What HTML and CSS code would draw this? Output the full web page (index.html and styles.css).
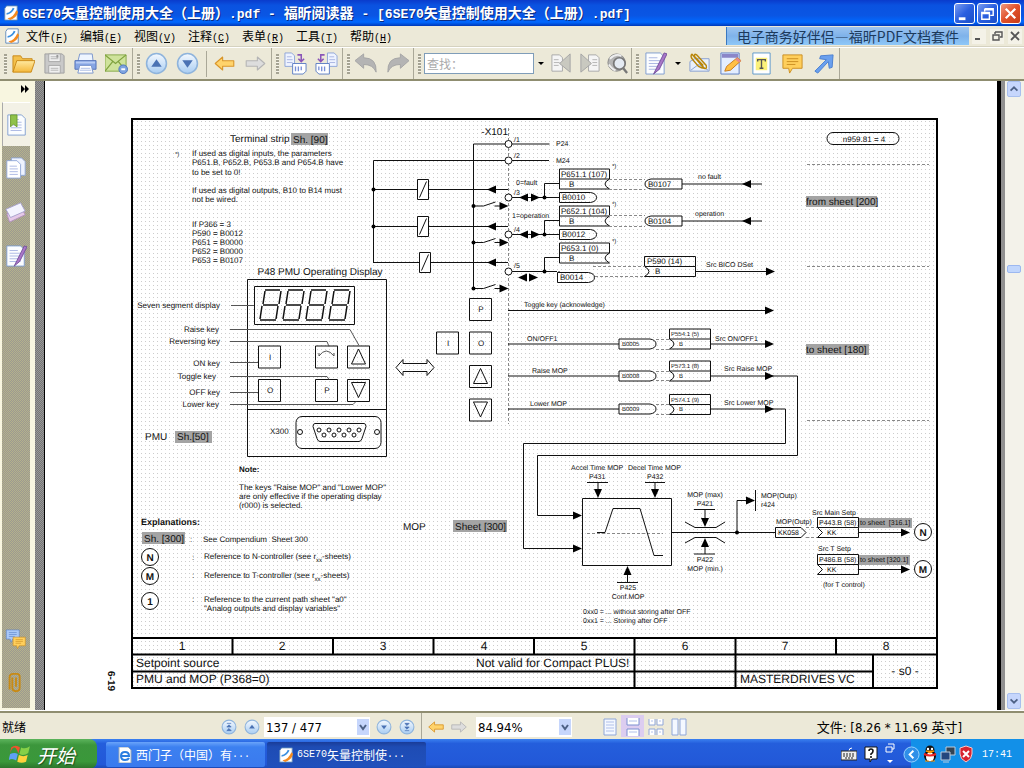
FILE: index.html
```html
<!DOCTYPE html>
<html lang="zh-CN">
<head>
<meta charset="utf-8">
<title>6SE70矢量控制使用大全（上册）.pdf - 福昕阅读器</title>
<link rel="stylesheet" href="styles.css">
</head>
<body>
<svg class="defs" aria-hidden="true">
  <defs>
    <linearGradient id="gFolder" x1="0" y1="0" x2="0" y2="1"><stop offset="0" stop-color="#ffe9a0"/><stop offset="1" stop-color="#f5b93c"/></linearGradient>
    <linearGradient id="gBall" x1="0" y1="0" x2="0" y2="1"><stop offset="0" stop-color="#f4f9ff"/><stop offset="1" stop-color="#a9cdf2"/></linearGradient>
    <symbol id="fox" viewBox="0 0 18 18">
      <path d="M4 1h12v16H2V4z" fill="#fff" stroke="#5b86b8"/>
      <path d="M4 9q5-1 7-6l2 1q-3 6-9 7z" fill="#3a8fe0"/>
      <path d="M5 15q7-1 10-9l2 2q-2 7-9 9z" fill="#f58a1f"/>
    </symbol>
    <symbol id="sheet" viewBox="0 0 24 24">
      <path d="M2 1h15l4 4v18H2z" fill="#fbfdff" stroke="#7f9ed0"/>
      <path d="M5 6h9M5 9h12M5 12h12M5 15h12M5 18h12" stroke="#a9b6e2" fill="none"/>
    </symbol>
    <symbol id="pen" viewBox="0 0 24 24">
      <path d="M10 23l3-6L21 1l3 1-8 16z" fill="#a877c8" stroke="#75509c"/>
    </symbol>
    <symbol id="left" viewBox="0 0 22 18"><path d="M1 9l8-7v4h12v6H9v4z" stroke-width="1.2" stroke-linejoin="round"/></symbol>
    <symbol id="ball" viewBox="0 0 22 22"><circle cx="11" cy="11" r="9.5" fill="url(#gBall)" stroke="#8fb4dc" stroke-width="1.5"/></symbol>
    <symbol id="bubble" viewBox="0 0 24 24"><path d="M2 3h20v14H12l-3 5-1-5H2z" stroke-linejoin="round"/><path d="M6 7h12M6 10h12M6 13h9" fill="none"/></symbol>
  </defs>
</svg>

<header class="titlebar">
  <svg class="i16"><use href="#fox"/></svg>
  <h1 class="title"><span class="lat">6SE70</span>矢量控制使用大全（上册）<span class="lat">.pdf - </span>福昕阅读器<span class="lat"> - [6SE70</span>矢量控制使用大全（上册）<span class="lat">.pdf]</span></h1>
  <div class="winbtns">
    <button class="wb" aria-label="最小化"><svg viewBox="0 0 20 20"><path d="M4 14h7v3H4z" fill="#fff"/></svg></button>
    <button class="wb" aria-label="还原"><svg viewBox="0 0 20 20"><path d="M7 5h9v7h-3M7 5v3M7 6h9M4 9h8v7H4zM4 10h8" fill="none" stroke="#fff" stroke-width="1.5"/></svg></button>
    <button class="wb close" aria-label="关闭"><svg viewBox="0 0 20 20"><path d="M5 5l10 10M15 5L5 15" stroke="#fff" stroke-width="2.4"/></svg></button>
  </div>
</header>

<nav class="menubar">
  <svg class="i16 doc"><use href="#fox"/></svg>
  <button>文件<span>(<u>F</u>)</span></button>
  <button>编辑<span>(<u>E</u>)</span></button>
  <button>视图<span>(<u>V</u>)</span></button>
  <button>注释<span>(<u>C</u>)</span></button>
  <button>表单<span>(<u>R</u>)</span></button>
  <button>工具<span>(<u>T</u>)</span></button>
  <button>帮助<span>(<u>H</u>)</span></button>
  <a class="banner" href="#">电子商务好伴侣—福昕PDF文档套件</a>
  <div class="mdi">
    <button aria-label="最小化文档"><svg viewBox="0 0 14 14"><path d="M3 10h5" stroke="#555" stroke-width="2"/></svg></button>
    <button aria-label="还原文档"><svg viewBox="0 0 14 14"><path d="M5 3h7v5h-2M5 3v2M3 6h6v5H3z" fill="none" stroke="#555" stroke-width="1.4"/></svg></button>
    <button aria-label="关闭文档"><svg viewBox="0 0 14 14"><path d="M3 3l8 8M11 3l-8 8" stroke="#555" stroke-width="1.8"/></svg></button>
  </div>
</nav>

<div class="toolbar">
  <div class="group">
    <i class="grip"></i>
    <button class="tb" aria-label="打开"><svg viewBox="0 0 24 24"><path d="M1 21V4h8l2 3h10v4" fill="#f3c04b" stroke="#c98a1a"/><path d="M1 21L5 9h19l-4 12z" fill="url(#gFolder)" stroke="#c98a1a"/></svg></button>
    <button class="tb" aria-label="保存"><svg viewBox="0 0 24 24"><path d="M2 2h18l2 2v18H2z" fill="#c9c9c9" stroke="#a0a0a0"/><path d="M6 2h12v8H6zM6 14h12v8H6z" fill="#f0f0f0" stroke="#a8a8a8"/><path d="M8 5h8M8 7h8M8 17h8M8 19h8" stroke="#b5b5b5"/><path d="M14 3h2v3h-2z" fill="#999"/></svg></button>
    <button class="tb" aria-label="打印"><svg viewBox="0 0 24 24"><path d="M6 2h13l1 8H4z" fill="#eef5ff" stroke="#7a95cc"/><path d="M1 9h22v9H1z" fill="#86a5e4" stroke="#5572b8"/><path d="M2 10h20v2H2z" fill="#b9cdf5"/><path d="M6 14h12l2 8H4z" fill="#fff" stroke="#7a95cc"/><path d="M7 17h10M6 19h12" stroke="#a9bbe5"/></svg></button>
    <button class="tb" aria-label="邮件"><svg viewBox="0 0 24 24"><path d="M0 3h22v17H0z" fill="#cfe39b" stroke="#86a84a"/><path d="M0 3l11 9L22 3M0 20l8-10M22 20l-8-10" fill="none" stroke="#7fa23e" stroke-width="1.3"/><circle cx="19" cy="18" r="4.5" fill="#7ea3e0" stroke="#4c74bd"/><path d="M17 18h4" stroke="#fff" stroke-width="2"/></svg></button>
  </div>
  <div class="group">
    <i class="grip"></i>
    <button class="tb" aria-label="上一页"><svg viewBox="0 0 22 22"><use href="#ball"/><path d="M6 14l5-7 5 7z" fill="#4a72b4"/></svg></button>
    <button class="tb" aria-label="下一页"><svg viewBox="0 0 22 22"><use href="#ball"/><path d="M6 8l5 7 5-7z" fill="#4a72b4"/></svg></button>
    <i class="split"></i>
    <button class="tb" aria-label="后退"><svg viewBox="0 0 22 22" fill="#ffd36b" stroke="#d9962a"><use href="#left" x="1" y="3" width="20" height="16"/></svg></button>
    <button class="tb" aria-label="前进"><svg viewBox="0 0 22 22" class="flip" fill="#ddd" stroke="#b5b5b5"><use href="#left" x="1" y="3" width="20" height="16"/></svg></button>
  </div>
  <div class="group">
    <i class="grip"></i>
    <button class="tb" aria-label="向右旋转"><svg viewBox="0 0 24 24"><path d="M1 1h7l3 3v11H1z" fill="#eef3ff" stroke="#8fa6d8"/><path d="M3 5h5M3 8h6M3 11h6" stroke="#a9b6e2"/><path d="M14 3h4v6M15 7l3 3 3-3" fill="none" stroke="#8a55b8" stroke-width="1.6"/><path d="M9 12h14v8l-3 3H9z" fill="#fff" stroke="#5f7fc4"/><path d="M12 15v5M15 15v5M18 15v4" stroke="#7890d8" stroke-width="1.4"/></svg></button>
    <button class="tb" aria-label="向左旋转"><svg viewBox="0 0 24 24"><path d="M13 1h7l3 3v11H13z" fill="#eef3ff" stroke="#8fa6d8"/><path d="M15 5h5M15 8h6M15 11h6" stroke="#a9b6e2"/><path d="M10 3H6v6M3 7l3 3 3-3" fill="none" stroke="#8a55b8" stroke-width="1.6"/><path d="M1 12h14v11H4l-3-3z" fill="#fff" stroke="#5f7fc4"/><path d="M4 15v4M7 15v5M10 15v5" stroke="#7890d8" stroke-width="1.4"/></svg></button>
  </div>
  <div class="group">
    <i class="grip"></i>
    <button class="tb" aria-label="撤销"><svg viewBox="0 0 24 24"><path d="M0 9l9-7v4q14 0 13 15-3-8-13-8v4z" fill="#b4b4b4" stroke="#a5a5a5"/></svg></button>
    <button class="tb" aria-label="重做"><svg viewBox="0 0 24 24"><path d="M24 9l-9-7v4Q1 6 2 21q3-8 13-8v4z" fill="#b4b4b4" stroke="#a5a5a5"/></svg></button>
  </div>
  <div class="group">
    <i class="grip"></i>
    <input class="find" type="text" aria-label="查找" placeholder="查找：">
    <button class="dd" aria-label="查找选项"></button>
    <button class="tb nar" aria-label="查找上一个"><svg viewBox="0 0 24 24"><path d="M2 3h8l3 3v14H2z" fill="#f5f5f5" stroke="#a9a9a9"/><path d="M4 8h5M4 11h6M4 14h5" stroke="#b5b5b5"/><path d="M21 2v19L10 12z" fill="#c9c9c0" stroke="#a5a5a5"/></svg></button>
    <button class="tb nar" aria-label="查找下一个"><svg viewBox="0 0 24 24"><path d="M11 3h8l3 3v14H11z" fill="#f5f5f5" stroke="#a9a9a9"/><path d="M15 8h5M15 11h5M15 14h5" stroke="#b5b5b5"/><path d="M3 2v19l11-9z" fill="#c9c9c0" stroke="#a5a5a5"/></svg></button>
    <button class="tb nar" aria-label="搜索"><svg viewBox="0 0 24 24"><circle cx="11" cy="11" r="9" fill="#b5b5b5" stroke="#888"/><path d="M4 7q6-6 12-3M3 13q3 5 7 6" stroke="#eee" stroke-width="2" fill="none"/><circle cx="14" cy="12" r="6" fill="#e4eaf2" stroke="#777" stroke-width="1.8"/><path d="M18 17l4 5" stroke="#777" stroke-width="2.4"/></svg></button>
  </div>
  <div class="group">
    <i class="grip"></i>
    <button class="tb" aria-label="签名"><svg viewBox="0 0 24 24"><use href="#sheet"/><use href="#pen"/></svg></button>
    <button class="dd" aria-label="更多"></button>
    <button class="tb" aria-label="附件"><svg viewBox="0 0 24 24"><path d="M2 10l5-3h15v13H2z" fill="#e9f0fb" stroke="#88a0d0"/><path d="M3 19l8-6 10 6" fill="none" stroke="#88a0d0"/><path d="M4 2l13 15q3 1 2-3L9 3Q6 1 7 5l9 9M4 2q-2 3 1 6l6 7q3 2 6 2" fill="none" stroke="#b8860b" stroke-width="1.5"/></svg></button>
    <button class="tb" aria-label="编辑"><svg viewBox="0 0 24 24"><path d="M2 1h19v22H2z" fill="#e4eeff" stroke="#5f7fc4"/><path d="M3 2h17v4H3z" fill="#8a86c8"/><path d="M6 20l2-5L19 6l4 3-11 10z" fill="#ffc045" stroke="#c87a1a"/><path d="M19 6l4 3-2 2-4-3z" fill="#e88a8a"/></svg></button>
    <button class="tb" aria-label="文本"><svg viewBox="0 0 24 24"><path d="M3 1h18v22H3z" fill="#fff" stroke="#5f9acb"/><path d="M6 6h12v13H6z" fill="#fbf17a"/><path d="M8 10V8h8v2M12 8v9M10 17h4" fill="none" stroke="#555" stroke-width="1.4"/></svg></button>
    <button class="tb" aria-label="注释"><svg viewBox="0 0 24 24" fill="#ffcf5c" stroke="#cc8f22"><use href="#bubble"/></svg></button>
    <button class="tb" aria-label="箭头"><svg viewBox="0 0 24 24"><path d="M3 20L15 8l-7-1 1-3 13-1-1 13-3 1-1-7L6 22z" fill="#6aa0ee" stroke="#4a7fd0"/></svg></button>
  </div>
</div>

<main class="work">
  <aside class="side">
    <button class="expand" aria-label="展开"><svg viewBox="0 0 10 8"><path d="M1 0l4 4-4 4zM5 0l4 4-4 4z"/></svg></button>
    <div class="tabs">
      <button class="tab on" aria-label="书签"><svg viewBox="0 0 24 24"><use href="#sheet"/><path d="M5 1h7v13l-4-3-3 3z" fill="#8fc24a" stroke="#6b9a2c"/></svg></button>
      <button class="tab" aria-label="页面"><svg viewBox="0 0 24 24"><path d="M7 1h11l4 4v15H7z" fill="#eef3ff" stroke="#8fa6d8"/><path d="M2 4h11l4 4v15H2z" fill="#fff" stroke="#8fa6d8"/><path d="M5 10h8M5 13h9M5 16h9M5 19h9" stroke="#a9b6e2"/></svg></button>
      <button class="tab" aria-label="图层"><svg viewBox="0 0 24 24"><path d="M2 14l16-6 4 7-17 8z" fill="#e5c9e8" stroke="#b492c0"/><path d="M1 9l16-7 5 9-16 7z" fill="#f4f4ff" stroke="#a5a0cc"/></svg></button>
      <button class="tab" aria-label="签名"><svg viewBox="0 0 24 24"><use href="#sheet"/><use href="#pen"/></svg></button>
      <button class="tab low" aria-label="注释"><svg viewBox="0 0 24 24"><g fill="#a9c8f8" stroke="#5f86cc"><use href="#bubble" x="0" y="0" width="17" height="17"/></g><g fill="#ffcf5c" stroke="#cc8f22"><use href="#bubble" x="7" y="8" width="17" height="16"/></g></svg></button>
      <button class="tab" aria-label="附件"><svg viewBox="0 0 24 24"><path d="M8 6v11q0 4 4 4t4-4V5q0-3-3-3H9Q5 2 5 6v13M12 6v10" fill="none" stroke="#c88a14" stroke-width="2"/></svg></button>
    </div>
  </aside>
  <div class="canvas">
    <svg class="page" viewBox="45 81 952 629" role="img" aria-label="Setpoint source">
      <defs>
        <pattern id="dots" width="4" height="4" patternUnits="userSpaceOnUse"><rect x="1" y="1" width="1" height="1" fill="#ccc"/></pattern>
        <path id="ar" d="M0 0l-9-4v8z"/>
        <path id="al" d="M0 0l9-4v8z"/>
        <path id="ad" d="M0 0l-4-9h8z"/>
        <path id="au" d="M0 0l-4 9h8z"/>
        <g id="digit" class="seg"><path d="M1 0h15M-1 15h15M-4 30h16M1 1l-2 13M17 1l-2 13M-2 16l-2 13M14 16l-2 13"/></g>
        <g id="relay" class="box"><path d="M0 0h11v20H0zM2 18l7-16"/></g>
        <g id="sw"><path class="ln" d="M0 0h10l12-4M21 0h8"/><circle r="2"/><use href="#ar" x="35"/></g>
        <g id="src"><path class="box" d="M0 0h50v10H0zM50 20H0V10M50 10q-9 5 0 10"/></g>
        <g id="rcap"><path class="box" d="M0 0h31q6 1 6 5t-6 5H0z"/></g>
        <g id="lcap"><path class="box" d="M37 0H6Q0 1 0 5t6 5h31z"/></g>
        <g id="sel"><path class="box" d="M0 0h41v10H0zM0 20h41V10M0 10q9 5 0 10"/></g>
        <g id="kk"><path class="box" d="M0 0h41v10H0zM41 10v10H0l5-5-5-5"/></g>
        <path id="key" class="box" d="M0 0h22v22H0z"/>
        <g id="kup"><use href="#key"/><path class="ln" d="M11 3l7 15H4z"/></g>
        <g id="kdn"><use href="#key"/><path class="ln" d="M11 18l7-15H4z"/></g>
      </defs>

      <rect x="132" y="119" width="805" height="569" fill="url(#dots)"/>
      <path class="frame" d="M132 119h805v569H132zM132 638h805M132 654.500h805M132 671.500h741M232.500 638v16M333 638v16M433.500 638v16M534 638v16M634.500 638v50M735.500 638v50M836 638v16M873 654v34"/>
      <g class="t12">
        <g text-anchor="middle"><text x="182" y="650">1</text><text x="282" y="650">2</text><text x="383" y="650">3</text><text x="484" y="650">4</text><text x="584" y="650">5</text><text x="685" y="650">6</text><text x="785" y="650">7</text><text x="886" y="650">8</text><text x="905" y="675">- s0 -</text></g>
        <text x="136" y="667">Setpoint source</text><text x="136" y="683">PMU and MOP (P368=0)</text>
        <text x="476" y="667">Not valid for Compact PLUS!</text><text x="740" y="683">MASTERDRIVES VC</text>
      </g>
      <text class="t10 strong" transform="translate(108 671) rotate(90)">6-19</text>

      <g class="hl"><path d="M291 133h37v12h-37zM175 431h37v12h-37zM142 532h43v12h-43zM453 520h54v12h-54zM806 196h71v11h-71zM806 344h63v11h-63zM859 518h53v10h-53zM859 555h51v10h-51z"/></g>
      <g class="t10">
        <text x="230" y="142">Terminal strip</text><text x="293" y="143">Sh. [90]</text>
        <text x="320" y="275" text-anchor="middle">P48 PMU Operating Display</text>
        <text x="145" y="440">PMU</text><text x="177" y="440">Sh.[50]</text><text x="144" y="542">Sh. [300]</text>
        <text x="403" y="530">MOP</text><text x="455" y="530">Sheet [300]</text>
        <text x="806" y="205">from sheet [200]</text><text x="806" y="353">to sheet [180]</text>
        <text x="508" y="135" text-anchor="end">-X101</text>
      </g>
      <text class="t9 strong" x="141" y="525">Explanations:</text>
      <g class="t8">
        <text x="192" y="156">If used as digital inputs, the parameters</text><text x="192" y="165">P651.B, P652.B, P653.B and P654.B have</text><text x="192" y="175">to be set to 0!</text>
        <text x="192" y="193">If used as digital outputs, B10 to B14 must</text><text x="192" y="202">not be wired.</text>
        <text x="192" y="227">If P366 = 3</text><text x="192" y="236">P590 = B0012</text><text x="192" y="245">P651 = B0000</text><text x="192" y="254">P652 = B0000</text><text x="192" y="263">P653 = B0107</text>
        <g text-anchor="end"><text x="220" y="308">Seven segment display</text><text x="219" y="332">Raise key</text><text x="220" y="344">Reversing key</text><text x="220" y="366">ON key</text><text x="216" y="379">Toggle key</text><text x="220" y="395">OFF key</text><text x="219" y="407">Lower key</text></g>
        <text x="270" y="434">X300</text>
        <text class="strong" x="239" y="472">Note:</text><text x="239" y="490">The keys "Raise MOP" and "Lower MOP"</text><text x="239" y="499">are only effective if the operating display</text><text x="239" y="508">(r000) is selected.</text>
        <text x="190" y="542">:</text><text x="203" y="542">See Compendium&#160; Sheet 300</text>
        <text x="192" y="560">:</text><text x="204" y="559">Reference to N-controller (see r<tspan class="t6" dy="3">xx</tspan><tspan dy="-3">-sheets)</tspan></text>
        <text x="192" y="578">:</text><text x="204" y="578">Reference to T-controller (see r<tspan class="t6" dy="3">xx</tspan><tspan dy="-3">-sheets)</tspan></text>
        <text x="192" y="602">:</text><text x="204" y="602">Reference to the current path sheet "a0"</text><text x="204" y="611">"Analog outputs and display variables"</text>
        <text x="561" y="177">P651.1 (107)</text><text x="569" y="187">B</text><text x="562" y="200">B0010</text>
        <text x="561" y="214">P652.1 (104)</text><text x="569" y="224">B</text><text x="562" y="237">B0012</text>
        <text x="561" y="251">P653.1 (0)</text><text x="569" y="261">B</text><text x="560" y="280">B0014</text>
        <text x="648" y="187">B0107</text><text x="648" y="224">B0104</text><text x="647" y="264">P590 (14)</text><text x="655" y="274">B</text>
        <text x="864" y="142" text-anchor="middle">n959.81 = 4</text>
        <g text-anchor="middle"><text x="270" y="360">I</text><text x="270" y="393">O</text><text x="327" y="393">P</text><text x="481" y="312">P</text><text x="448" y="346">I</text><text x="481" y="346">O</text></g>
      </g>

      <path class="box" d="M247.500 279.500h139v177h-139zM247.500 409.500h139M254.500 286.500h100v38h-100z"/>
      <use href="#digit" x="264" y="290"/><use href="#digit" x="287" y="290"/><use href="#digit" x="310" y="290"/><use href="#digit" x="333" y="290"/>
      <use href="#key" x="258.500" y="346"/><use href="#key" x="258.500" y="379.500"/><use href="#key" x="315.500" y="346"/><use href="#key" x="315.500" y="379.500"/><use href="#kup" x="347.500" y="346"/><use href="#kdn" x="347.500" y="379.500"/>
      <path class="thin" d="M319 356q7-10 15 0M319 356v-3M334 356v-3M231 305.500h23M230 329.500h120l9 16M230 341.500h97l2 5M230 362.500h28M230 376.500h97l2 3M230 392.500h28M230 404.500h123l3-3"/>
      <rect class="box" x="296" y="416.500" width="85" height="32" rx="6"/>
      <path class="box" d="M315 423.500h49q2 0 2 3l-4 12q-1 3-3 3h-39q-2 0-3-3l-4-12q0-3 2-3z"/>
      <g class="box"><circle cx="300" cy="432" r="2.500"/><circle cx="377" cy="432" r="2.500"/><circle cx="319" cy="430" r="2"/><circle cx="329" cy="430" r="2"/><circle cx="339" cy="430" r="2"/><circle cx="349" cy="430" r="2"/><circle cx="359" cy="430" r="2"/><circle cx="324" cy="435" r="2"/><circle cx="334" cy="435" r="2"/><circle cx="344" cy="435" r="2"/><circle cx="354" cy="435" r="2"/></g>
      <path class="box" d="M396 367.500l7-8v4h24v-4l7 8-7 8v-4h-24v4z"/>

      <path class="dash" d="M508.500 128v296"/>
      <path class="ln" d="M473.500 288V144h76M373.500 263v-102.500H549M373 189.500h135M373 226.500h135M373 262.500h135M512 197.500h47M544.500 197v-13.500H559M512 234.500h47M544.500 234v-13.500H559M512 271.500h45M544.500 271v-13.500H559M559 271v2"/>
      <g class="wb0"><circle cx="508.500" cy="144" r="3.500"/><circle cx="508.500" cy="160.500" r="3.500"/><circle cx="508.500" cy="197.500" r="3.500"/><circle cx="508.500" cy="234.500" r="3.500"/><circle cx="508.500" cy="271.500" r="3.500"/></g>
      <circle cx="373.500" cy="189.500" r="2"/><circle cx="373.500" cy="226.500" r="2"/><circle cx="544.500" cy="197.500" r="2"/><circle cx="544.500" cy="234.500" r="2"/><circle cx="544.500" cy="271.500" r="2"/>
      <g class="fillw"><use href="#relay" x="417.500" y="179.500"/><use href="#relay" x="417.500" y="216.500"/><use href="#relay" x="419.500" y="252.500"/></g>
      <use href="#al" x="487" y="189.500"/><use href="#al" x="487" y="226.500"/><use href="#al" x="487" y="262.500"/>
      <use href="#sw" x="473.500" y="206"/><use href="#sw" x="473.500" y="242.500"/><use href="#sw" x="473.500" y="288.500"/>
      <use href="#al" x="519" y="197.500"/><use href="#ar" x="540" y="197.500"/><use href="#al" x="519" y="234.500"/><use href="#ar" x="540" y="234.500"/><use href="#al" x="518" y="277.500"/><use href="#ar" x="538" y="277.500"/>
      <use href="#src" x="559.500" y="169"/><use href="#src" x="559.500" y="206"/><use href="#src" x="559.500" y="243"/>
      <use href="#rcap" x="559.500" y="192.500"/><use href="#rcap" x="559.500" y="229.500"/><use href="#rcap" x="557.500" y="272.500"/>
      <use href="#lcap" x="645" y="179"/><use href="#lcap" x="645" y="216"/>
      <path class="box" d="M644.500 256.500h51v10h-51zM644.500 276.500h51v-10M644.500 266.500q9 5 0 10"/>
      <path class="dash" d="M609 179.500h36M609 189.500h36M609 215.500h36M609 226.500h36M593 266.500h52M595 276.500h50M807 164.500h122M807 266.500h122M807 420.500h122M656 339.500h14M656 349.500h14M656 371.500h14M656 380.500h14M656 404.500h14M656 414.500h14M806 527.500h12M806 537.500h12"/>
      <path class="ln" d="M682 184h80M682 221h80M696 271.500h72"/>
      <use href="#al" x="742" y="184"/><use href="#al" x="742" y="221"/><use href="#ar" x="775" y="271.500"/>
      <rect class="box" x="827" y="132.500" width="72" height="12" rx="6"/>

      <use href="#key" x="469.500" y="298.500"/><use href="#key" x="436.500" y="332"/><use href="#key" x="469.500" y="332"/><use href="#kup" x="469.500" y="365.500"/><use href="#kdn" x="469.500" y="399"/>
      <path class="ln" d="M508 310.500h260M508 344h111M710 344h60M508 376h111M710 376h87.500v79.500h-260v60H574M508 409h111M710 409h75.500v34.500H523.500v105H574"/>
      <use href="#ar" x="774" y="310.500"/><use href="#ar" x="774" y="344"/><use href="#ar" x="774" y="376"/><use href="#ar" x="774" y="409"/><use href="#ar" x="582" y="515.500"/><use href="#ar" x="582" y="548.500"/>
      <use href="#rcap" x="619" y="339"/><use href="#rcap" x="619" y="371"/><use href="#rcap" x="619" y="404"/>
      <use href="#sel" x="669.500" y="329"/><use href="#sel" x="669.500" y="361"/><use href="#sel" x="669.500" y="394.500"/>

      <path class="box" d="M582.500 498.500h89v67h-89z"/>
      <path class="dash" d="M587 533.500h76"/>
      <path class="ln" d="M597 532.500h8l8-24h27l14 47h9M587 482.500h21M598 482v9M645 482.500h20M655 482v9M617 582.500h21M627.500 582v-9M671 532.500h105M685 522l10 5.500h21l9-5.500M685 543l10-5.500h21l9 5.500M694 509.500h21M705 509v11M694 554h21M705 554v-9M737 532v-31.500h12M755.500 490v21M858 532.500h45M858 569.500h45"/>
      <use href="#ad" x="598" y="498"/><use href="#ad" x="655" y="498"/><use href="#au" x="627.500" y="566"/><use href="#ad" x="705" y="527"/><use href="#au" x="705" y="538"/><use href="#ar" x="755" y="500.500"/><use href="#ar" x="910" y="532.500"/><use href="#ar" x="910" y="569.500"/>
      <circle cx="737" cy="532.500" r="2"/>
      <path class="box" d="M775.500 527.500H801l5 5-5 5h-25.500z"/>
      <use href="#kk" x="817.500" y="517.500"/><use href="#kk" x="817.500" y="554.500"/>
      <g class="wb0"><circle cx="923" cy="532" r="8.500"/><circle cx="923" cy="569" r="8.500"/><circle cx="150" cy="557" r="8.500"/><circle cx="150" cy="576" r="8.500"/><circle cx="150" cy="601" r="8.500"/></g>
      <g class="t10 strong" text-anchor="middle"><text x="923" y="536">N</text><text x="923" y="573">M</text><text x="150" y="561">N</text><text x="150" y="580">M</text><text x="150" y="605">1</text></g>

      <g class="t7">
        <text x="514" y="142">/1</text><text x="514" y="158">/2</text><text x="514" y="195">/3</text><text x="514" y="232">/4</text><text x="514" y="268">/5</text>
        <text x="556" y="146">P24</text><text x="556" y="163">M24</text><text x="516" y="185">0=fault</text><text x="512" y="218">1=operation</text>
        <text x="698" y="179">no fault</text><text x="695" y="216">operation</text><text x="706" y="267">Src BICO DSet</text>
        <text x="524" y="307">Toggle key (acknowledge)</text><text x="527" y="341">ON/OFF1</text><text x="532" y="373">Raise MOP</text><text x="530" y="406">Lower MOP</text>
        <text x="715" y="341">Src ON/OFF1</text><text x="724" y="371">Src Raise MOP</text><text x="724" y="405">Src Lower MOP</text>
        <text x="571" y="470">Accel Time MOP</text><text x="628" y="470">Decel Time MOP</text><text x="589" y="479">P431</text><text x="647" y="479">P432</text>
        <g text-anchor="middle"><text x="628" y="590">P425</text><text x="628" y="599">Conf.MOP</text><text x="705" y="497">MOP (max)</text><text x="705" y="506">P421</text><text x="705" y="562">P422</text><text x="705" y="571">MOP (min.)</text></g>
        <text x="583" y="614">0xx0 = ... without storing after OFF</text><text x="583" y="623">0xx1 = ... Storing after OFF</text>
        <text x="761" y="498">MOP(Outp)</text><text x="761" y="507">r424</text><text x="776" y="524">MOP(Outp)</text><text x="778" y="535">KK058</text>
        <text x="812" y="515">Src Main Setp</text><text x="819" y="525">P443.B (58)</text><text x="827" y="535">KK</text><text x="860" y="525">to sheet&#160; [316.1]</text>
        <text x="818" y="551">Src T Setp</text><text x="819" y="562">P486.B (58)</text><text x="827" y="572">KK</text><text x="860" y="562">to sheet [320.1]</text><text x="823" y="587">(for T control)</text>
      </g>
      <g class="t6">
        <text x="175" y="156">*)</text><text x="612" y="168">*)</text><text x="612" y="206">*)</text><text x="612" y="243">*)</text>
        <text x="622" y="346">B0005</text><text x="622" y="378">B0008</text><text x="622" y="411">B0009</text>
        <text x="671" y="336">P554.1 (5)</text><text x="671" y="368">P573.1 (8)</text><text x="671" y="402">P574.1 (9)</text>
        <text x="679" y="346">B</text><text x="679" y="378">B</text><text x="679" y="411">B</text>
      </g>
    </svg>
  </div>
  <div class="scroll">
    <button class="sb" aria-label="向上滚动"><svg viewBox="0 0 14 14"><path d="M3 9l4-4 4 4" fill="none" stroke="#4d6185" stroke-width="2"/></svg></button>
    <div class="track"><div class="thumb"></div></div>
    <button class="sb" aria-label="向下滚动"><svg viewBox="0 0 14 14"><path d="M3 5l4 4 4-4" fill="none" stroke="#4d6185" stroke-width="2"/></svg></button>
  </div>
</main>

<footer class="status">
  <span class="ready">就绪</span>
  <button class="st" aria-label="第一页"><svg viewBox="0 0 22 22"><use href="#ball"/><path d="M8 6h6M8 11l3-3 3 3zM8 16l3-3 3 3z" fill="#4a72b4" stroke="#4a72b4"/></svg></button>
  <button class="st" aria-label="上一页"><svg viewBox="0 0 22 22"><use href="#ball"/><path d="M7 13l4-5 4 5z" fill="#4a72b4"/></svg></button>
  <label class="combo pg"><select aria-label="页码"><option>137 / 477</option></select><svg viewBox="0 0 12 16"><path d="M3 6l3 4 3-4" fill="none" stroke="#4d6185" stroke-width="2"/></svg></label>
  <button class="st" aria-label="下一页"><svg viewBox="0 0 22 22"><use href="#ball"/><path d="M7 9l4 5 4-5z" fill="#4a72b4"/></svg></button>
  <button class="st" aria-label="最后一页"><svg viewBox="0 0 22 22"><use href="#ball"/><path d="M8 16h6M8 6l3 3 3-3zM8 11l3 3 3-3z" fill="#4a72b4" stroke="#4a72b4"/></svg></button>
  <i class="split"></i>
  <button class="st" aria-label="后退"><svg viewBox="0 0 22 22" fill="#ffd36b" stroke="#d9962a"><use href="#left" y="2" width="22" height="18"/></svg></button>
  <button class="st" aria-label="前进"><svg viewBox="0 0 22 22" class="flip" fill="#ddd" stroke="#b5b5b5"><use href="#left" y="2" width="22" height="18"/></svg></button>
  <label class="combo zm"><select aria-label="缩放"><option>84.94%</option></select><svg viewBox="0 0 12 16"><path d="M3 6l3 4 3-4" fill="none" stroke="#4d6185" stroke-width="2"/></svg></label>
  <div class="modes">
    <button class="st" aria-label="单页"><svg viewBox="0 0 18 18"><path d="M3 1h12v16H3z" fill="#f4f8ff" stroke="#8fa6d8"/><path d="M5 4h8M5 7h8M5 10h8M5 13h8" stroke="#b0c0ea"/></svg></button>
    <button class="st on" aria-label="连续"><svg viewBox="0 0 18 18"><path d="M3 0v7h12V0M3 18v-7h12v7" fill="#fff" stroke="#7d8fd0"/><path d="M5 3h8M5 14h8" stroke="#b0c0ea"/></svg></button>
    <button class="st" aria-label="连续对开"><svg viewBox="0 0 18 18"><path d="M2 1v6h6V1M10 1v6h6V1M2 17v-6h6v6M10 17v-6h6v6" fill="#fff" stroke="#8fa6d8"/><path d="M4 3h2M12 3h2M4 14h2M12 14h2" stroke="#b0c0ea"/></svg></button>
    <button class="st" aria-label="对开"><svg viewBox="0 0 18 18"><path d="M2 1h6v16H2zM10 1h6v16h-6z" fill="#f4f8ff" stroke="#8fa6d8"/></svg></button>
  </div>
  <span class="size">文件: [8.26 * 11.69 英寸]</span>
</footer>

<div class="taskbar">
  <button class="start"><svg viewBox="0 0 20 20"><path d="M2 4q4-3 8 0L8.500 9.500Q5-1 1 9z" fill="#f0522d"/><path d="M11 4q4 2 8-1l-1.500 6q-4 3-8 1z" fill="#86d048"/><path d="M1 10q4-2 7 0l-1.500 6q-4-3-7 0z" fill="#5fa0f5"/><path d="M9 11q4 2 8 0l-1.500 6q-4 2-8 0z" fill="#ffd23c"/></svg>开始</button>
  <button class="task"><svg viewBox="0 0 16 16"><path d="M2 0h9l3 3v13H2z" fill="#fff" stroke="#9ab"/><path d="M4 9h8q0-4-4-4t-4 4 4 4q3 0 4-2" fill="none" stroke="#2a7de0" stroke-width="2"/></svg>西门子（中国）有<span class="lat">...</span></button>
  <button class="task cur"><svg viewBox="0 0 18 18"><use href="#fox"/></svg><span class="lat">6SE70</span>矢量控制使<span class="lat">...</span></button>
  <div class="lang">
    <svg viewBox="0 0 16 16"><path d="M8 5q0-3 3-3" fill="none" stroke="#fff"/><path d="M0 5h16v9H0z" fill="#eee" stroke="#222"/><path d="M2 8h12M2 10h12M4 12h8" stroke="#222" stroke-dasharray="2 1"/></svg>
    <svg viewBox="0 0 16 16"><path d="M2 1h12v12H9l-2 3v-3H2z" fill="#fff" stroke="#111"/><path d="M6 5q0-2 2-2t2 2-2 3v1M8 10v2" fill="none" stroke="#111" stroke-width="1.600"/></svg>
    <svg class="mini" viewBox="0 0 10 22"><path d="M3 1h6v5H7M1 4h6v5H1z" fill="none" stroke="#fff"/><path d="M2 17h6l-3 3z" fill="#fff"/></svg>
  </div>
  <div class="tray">
    <button class="hide" aria-label="显示隐藏的图标"><svg viewBox="0 0 18 18"><circle cx="9" cy="9" r="8" fill="#2f8fe8" stroke="#9fd6ff"/><path d="M11 5L7 9l4 4" fill="none" stroke="#fff" stroke-width="2"/></svg></button>
    <svg viewBox="0 0 16 18"><ellipse cx="8" cy="11" rx="6" ry="6" fill="#111"/><circle cx="8" cy="5" r="4.500" fill="#111"/><ellipse cx="8" cy="12" rx="4" ry="4.500" fill="#fff"/><circle cx="6" cy="4" r="1.200" fill="#fff"/><circle cx="10" cy="4" r="1.200" fill="#fff"/><path d="M4 6h8l-4 2zM3 16h4M9 16h4" fill="#f90" stroke="#f90"/><path d="M2 9q6 3 12 0" fill="none" stroke="#e22" stroke-width="2"/></svg>
    <svg viewBox="0 0 16 18"><path d="M6 2h9v8H6z" fill="#345" stroke="#bcd"/><path d="M1 7h9v8H1z" fill="#24467e" stroke="#bcd"/><path d="M3 17h6" stroke="#bcd"/></svg>
    <svg viewBox="0 0 16 18"><path d="M8 1l6 2v6q0 5-6 8-6-3-6-8V3z" fill="#d8232f" stroke="#f8c8c8"/><path d="M5 6l6 6M11 6l-6 6" stroke="#fff" stroke-width="2"/></svg>
    <time>17:41</time>
  </div>
</div>
</body>
</html>
```
FILE: styles.css
```css
* { box-sizing: border-box; }
body {
  margin: 0;
  min-height: 100vh;
  display: flex;
  flex-direction: column;
  background: #ece9d8;
  color: #000;
  font: 12px "Liberation Sans", "Noto Sans CJK SC", sans-serif;
  overflow-x: hidden;
}
button {
  margin: 0;
  padding: 0;
  border: 0;
  background: none;
  color: inherit;
  font: inherit;
}
svg { display: block; flex: none; }
.defs { position: absolute; width: 0; height: 0; }
.lat { font-family: "Liberation Mono", monospace; }

/* title bar */
.titlebar {
  height: 26px;
  display: flex;
  align-items: center;
  padding: 0 3px;
  background: linear-gradient(#0a3bcc, #0a52e0 20%, #0a56e4 60%, #0068ff 85%, #0038b8);
}
.i16 { width: 16px; height: 16px; }
.title {
  flex: 1;
  min-width: 0;
  margin: 0 0 0 3px;
  overflow: hidden;
  white-space: pre;
  color: #fff;
  font: bold 14px/24px "Noto Sans CJK SC", sans-serif;
  text-shadow: 1px 1px #0a2a80;
}
.title .lat { font-size: 13px; }
.winbtns { display: flex; gap: 2px; }
.wb {
  width: 21px;
  height: 21px;
  border: 1px solid #fff;
  border-radius: 3px;
  background: linear-gradient(135deg, #7a9cf0, #2a5fe0 50%, #1b4fc8);
}
.wb.close { background: linear-gradient(135deg, #f09a80, #e0502a 50%, #c83c18); }

/* menu */
.menubar {
  height: 21px;
  display: flex;
  align-items: center;
  padding-left: 4px;
  border-bottom: 1px solid #d5d2c0;
  font: 12px/18px "Noto Sans CJK SC", sans-serif;
}
.menubar > button { width: 54px; white-space: nowrap; }
.menubar > button span { font: 10px "Liberation Mono", monospace; }
.banner {
  margin-left: auto;
  width: 243px;
  height: 18px;
  border-left: 1px solid #3a78c0;
  background: linear-gradient(#9cc4f0, #7fb2ea 50%, #8ec8f8);
  color: #1c3a5c;
  font-size: 14px;
  text-align: center;
  text-decoration: none;
  white-space: nowrap;
}
.mdi { display: flex; gap: 4px; padding: 0 2px 0 3px; }
.mdi button { width: 14px; height: 15px; background: #f4f2e8; }

/* toolbar */
.toolbar {
  height: 34px;
  display: flex;
  border-top: 1px solid #fff;
  border-bottom: 2px solid #8f8d70;
}
.group {
  display: flex;
  align-items: center;
  padding-left: 4px;
  border-right: 1px solid #aaa898;
}
.grip {
  width: 4px;
  height: 20px;
  background: repeating-linear-gradient(#a5a393 0 2px, #f6f4ea 2px 3px);
  border-right: 1px solid #ece9d8;
}
.tb { width: 31px; height: 28px; display: grid; place-items: center; }
.tb svg { width: 23px; height: 23px; }
.tb.nar { width: 28px; }
.flip { transform: scaleX(-1); }
.split { width: 6px; height: 26px; background: linear-gradient(#aaa898, #aaa898) 3px 0 / 1px 100% no-repeat; }
.find {
  width: 110px;
  height: 21px;
  margin-left: 2px;
  padding: 0 2px;
  border: 1px solid #7f9db9;
  border-radius: 0;
  background: #fff;
  font: 12px "Noto Sans CJK SC", sans-serif;
}
.find::placeholder { color: #aaa; opacity: 1; }
.dd { width: 13px; height: 20px; display: grid; place-items: center; }
.dd::before { content: ""; border: 3px solid transparent; border-top-color: #000; border-bottom: 0; }

/* work area */
.work { flex: 1; display: flex; border-bottom: 1px solid #fff; }
.side {
  width: 35px;
  display: flex;
  flex-direction: column;
  padding: 0 5px 2px 2px;
  background: #f8f6e0;
}
.expand { height: 21px; display: flex; justify-content: flex-end; padding: 4px 0 0; background: none; }
.expand svg { width: 10px; height: 8px; }
.tabs {
  flex: 1;
  display: flex;
  flex-direction: column;
  background: repeating-conic-gradient(#9c9a90 0 25%, #b4b18c 0 50%) 0 0 / 2px 2px;
}
.tab { height: 44px; display: grid; place-items: center; }
.tab svg { width: 22px; height: 22px; }
.tab.on { background: #f3f1e6; border-left: 1px solid #aaa; border-top: 1px solid #fff; }
.tab.low { margin-top: auto; }
.tab:last-child { margin-bottom: 3px; }
.canvas {
  flex: 1;
  min-width: 0;
  padding-left: 9px;
  border-right: 4px solid #909090;
  background: repeating-conic-gradient(#757575 0 25%, #989898 0 50%) 0 0 / 2px 2px;
}
.page {
  width: 100%;
  height: 100%;
  border-left: 1px solid #000;
  border-right: 4px solid #000;
  background: #fff;
}
.scroll {
  width: 19px;
  display: flex;
  flex-direction: column;
  padding: 0 3px 1px 2px;
  background: #f3f2ea;
}
.sb { width: 14px; height: 16px; border: 1px solid #a8bfee; border-radius: 2px; background: #c6d6fc; }
.sb svg { width: 12px; height: 14px; }
.track { flex: 1; padding-top: 168px; }
.thumb { height: 8px; border: 1px solid #9cb8f0; border-radius: 2px; background: #c0d6fc; }

/* drawing */
.page text { font-family: "Liberation Sans", sans-serif; text-rendering: geometricPrecision; white-space: pre; fill: #111; }
.t6 { font-size: 6px; }
.t7 { font-size: 7px; }
.t8 { font-size: 8px; }
.t9 { font-size: 9px; }
.t10 { font-size: 10px; }
.t12 { font-size: 12px; }
.strong { font-weight: bold; }
.frame { fill: none; stroke: #000; stroke-width: 2; }
.ln, .box { fill: none; stroke: #111; stroke-width: 1; }
.seg { fill: none; stroke: #111; stroke-width: 1.5; }
.thin { fill: none; stroke: #555; stroke-width: 1; }
.dash { fill: none; stroke: #888; stroke-width: 1; stroke-dasharray: 3 2; }
.wb0 { fill: #fff; stroke: #111; stroke-width: 1; }
#relay { fill: #fff; }
#relay path { fill: #fff; }
.hl { fill: #a4a4a4; }

/* status bar */
.status {
  height: 28px;
  display: flex;
  align-items: center;
  border-top: 2px solid #8f8d70;
  font: 13px "DejaVu Sans Condensed", "DejaVu Sans", "Noto Sans CJK SC", sans-serif;
}
.ready { width: 217px; padding-left: 2px; font-size: 12px; }
.st { width: 23px; height: 22px; display: grid; place-items: center; padding-top: 1px; }
.st svg { width: 16px; height: 16px; }
.st.on { background: #dccdf0; }
.combo { position: relative; height: 20px; margin: 2px 2px 0 1px; background: #fff; }
.pg { width: 106px; }
.zm { width: 96px; margin-left: 6px; }
.combo select {
  width: 100%;
  height: 100%;
  padding: 0 2px;
  border: 0;
  appearance: none;
  background: none;
  color: #000;
  font: 13px "DejaVu Sans Condensed", "DejaVu Sans", sans-serif;
}
.combo svg { position: absolute; right: 1px; top: 2px; width: 12px; height: 16px; background: #c6d6fc; pointer-events: none; }
.modes { display: flex; margin-left: 24px; }
.modes svg { width: 18px; height: 18px; }
.size { margin-left: auto; margin-right: 62px; }

/* task bar */
.taskbar {
  height: 30px;
  display: flex;
  align-items: stretch;
  background: linear-gradient(#3a80f0, #245edc 15%, #2258d8 85%, #1a44a8);
  color: #fff;
  font: 12px "Noto Sans CJK SC", sans-serif;
}
.start {
  width: 97px;
  margin-right: 9px;
  display: flex;
  align-items: center;
  gap: 6px;
  padding-left: 9px;
  border-radius: 0 8px 8px 0;
  background: linear-gradient(#5cb45c, #3c963c 20%, #3a983a 75%, #2a702a);
  font-size: 19px;
  font-style: italic;
  text-shadow: 1px 1px 1px #1c4c1c;
}
.start svg { width: 22px; height: 22px; }
.task {
  width: 159px;
  height: 25px;
  margin: 3px 2px 0 0;
  display: flex;
  align-items: center;
  padding-left: 11px;
  border-radius: 2px;
  background: linear-gradient(#6aa4fa, #3c80f0 20%, #3a7aee);
  white-space: nowrap;
}
.task svg { width: 16px; height: 16px; margin-right: 3px; }
.task .lat { font-size: 10px; }
.task.cur { background: linear-gradient(#1a3c98, #1e4cb4 20%, #2050bc); }
.lang { margin-left: auto; display: flex; align-items: center; gap: 6px; padding-right: 8px; }
.lang svg { width: 16px; height: 16px; }
.lang svg.mini { width: 10px; height: 22px; }
.tray {
  width: 121px;
  display: flex;
  align-items: center;
  gap: 2px;
  background: linear-gradient(90deg, #0000 8px, #1290e8 8px);
}
.hide svg { width: 17px; height: 17px; }
.tray > svg { width: 16px; height: 18px; }
.tray time { margin-left: 6px; font: 10px "Liberation Mono", monospace; }
```
